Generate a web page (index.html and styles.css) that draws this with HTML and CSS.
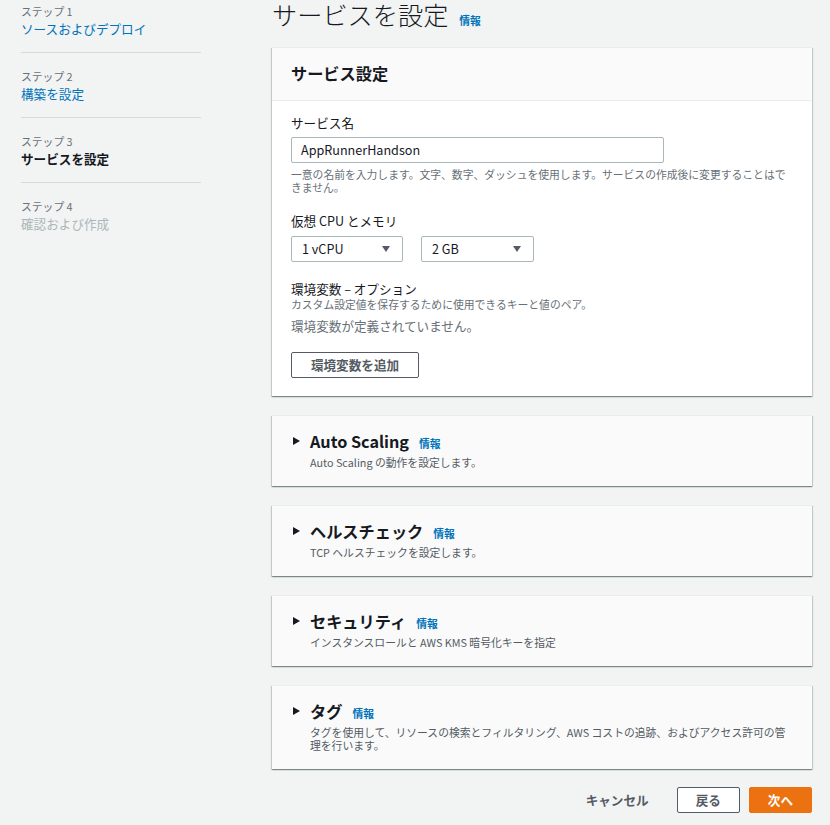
FILE: index.html
```html
<!DOCTYPE html>
<html lang="ja">
<head>
<meta charset="utf-8">
<title>サービスを設定</title>
<link rel="stylesheet" href="styles.css">
</head>
<body>
<div class="layout">
  <nav class="steps">
    <div class="step">
      <div class="step-label">ステップ 1</div>
      <a class="step-title link">ソースおよびデプロイ</a>
    </div>
    <div class="step">
      <div class="step-label">ステップ 2</div>
      <a class="step-title link">構築を設定</a>
    </div>
    <div class="step">
      <div class="step-label">ステップ 3</div>
      <div class="step-title current">サービスを設定</div>
    </div>
    <div class="step">
      <div class="step-label">ステップ 4</div>
      <div class="step-title disabled">確認および作成</div>
    </div>
  </nav>

  <main class="main">
    <h1 class="page-title">サービスを設定<a class="info">情報</a></h1>

    <section class="card">
      <div class="card-header"><h2 class="card-title">サービス設定</h2></div>
      <div class="card-body">
        <div class="label">サービス名</div>
        <div class="input">AppRunnerHandson</div>
        <p class="hint hint-gap">一意の名前を入力します。文字、数字、ダッシュを使用します。サービスの作成後に変更することはできません。</p>

        <div class="label field-gap">仮想 CPU とメモリ</div>
        <div class="selects">
          <div class="select"><span>1 vCPU</span><i class="caret"></i></div>
          <div class="select"><span>2 GB</span><i class="caret"></i></div>
        </div>

        <div class="label field-gap">環境変数 – オプション</div>
        <p class="hint">カスタム設定値を保存するために使用できるキーと値のペア。</p>
        <p class="empty">環境変数が定義されていません。</p>
        <button class="btn btn-normal add-btn">環境変数を追加</button>
      </div>
    </section>

    <section class="card expand">
      <i class="arrow"></i>
      <h3 class="expand-title">Auto Scaling<a class="info">情報</a></h3>
      <p class="expand-desc">Auto Scaling の動作を設定します。</p>
    </section>

    <section class="card expand">
      <i class="arrow"></i>
      <h3 class="expand-title">ヘルスチェック<a class="info">情報</a></h3>
      <p class="expand-desc">TCP ヘルスチェックを設定します。</p>
    </section>

    <section class="card expand">
      <i class="arrow"></i>
      <h3 class="expand-title">セキュリティ<a class="info">情報</a></h3>
      <p class="expand-desc">インスタンスロールと AWS KMS 暗号化キーを指定</p>
    </section>

    <section class="card expand">
      <i class="arrow"></i>
      <h3 class="expand-title">タグ<a class="info">情報</a></h3>
      <p class="expand-desc">タグを使用して、リソースの検索とフィルタリング、AWS コストの追跡、およびアクセス許可の管理を行います。</p>
    </section>

    <div class="actions">
      <button class="btn btn-link">キャンセル</button>
      <button class="btn btn-normal">戻る</button>
      <button class="btn btn-primary">次へ</button>
    </div>
  </main>
</div>
</body>
</html>
```

FILE: styles.css
```css
* { box-sizing: border-box; }

html, body {
  margin: 0;
  padding: 0;
  background: #f2f3f3;
  color: #16191f;
  font-family: "Noto Sans CJK JP", "Noto Sans", sans-serif;
  font-size: 12.6px;
  line-height: 18px;
}

.layout {
  display: grid;
  grid-template-columns: 180px 540px;
  column-gap: 71px;
  padding-left: 21px;
}

/* ---------- steps ---------- */
.steps {
  padding-top: 4px;
}

.step {
  display: flex;
  flex-direction: column;
  padding: 16px 0 14px;
  border-top: 1px solid #d5dbdb;
}

.step:first-child {
  padding-top: 0;
  border-top: none;
}

.step-label {
  font-size: 10.8px;
  line-height: 14px;
  color: #687078;
}

.step-title {
  margin-top: 2px;
  font-size: 12.6px;
  line-height: 18px;
}

.link { color: #0073bb; }
.current { color: #16191f; font-weight: 700; }
.disabled { color: #aab7b8; }

/* ---------- main ---------- */
.main {
  display: flex;
  flex-direction: column;
  gap: 19px;
  padding-bottom: 12px;
}

.page-title {
  margin: 0;
  height: 28px;
  font-size: 25.2px;
  line-height: 28px;
  font-weight: 300;
  color: #16191f;
  white-space: nowrap;
}

.info {
  margin-left: 10px;
  font-size: 10.8px;
  line-height: 1;
  font-weight: 700;
  color: #0073bb;
}

.page-title .info { margin-left: 11px; }

.card {
  background: #ffffff;
  border-top: 1px solid #eaeded;
  box-shadow: 0 1px 1px 0 rgba(0, 28, 36, 0.3),
              1px 1px 1px 0 rgba(0, 28, 36, 0.15),
              -1px 1px 1px 0 rgba(0, 28, 36, 0.15);
}

.card-header {
  background: #fafafa;
  padding: 15px 19px 17px;
  border-bottom: 1px solid #eaeded;
}

.card-title {
  margin: 0;
  font-size: 16.2px;
  line-height: 20px;
  font-weight: 700;
}

.card-body {
  padding: 13px 19px 18px;
  display: flex;
  flex-direction: column;
  align-items: flex-start;
}

.label {
  font-size: 12.6px;
  line-height: 18px;
  color: #16191f;
}

.field-gap { margin-top: 18px; }

.input {
  margin-top: 5px;
  width: 373px;
  height: 26px;
  padding: 0 9px;
  border: 1px solid #aab7b8;
  border-radius: 2px;
  background: #ffffff;
  line-height: 24px;
  font-size: 12.6px;
}

.hint {
  margin: 0;
  font-size: 10.8px;
  line-height: 13px;
  color: #687078;
}

.hint-gap { margin-top: 5px; }

.selects {
  margin-top: 6px;
  display: flex;
  gap: 18px;
}

.select {
  width: 112px;
  height: 26px;
  padding: 0 12px 0 10px;
  border: 1px solid #aab7b8;
  border-radius: 2px;
  background: #ffffff;
  display: flex;
  align-items: center;
  justify-content: space-between;
  line-height: 24px;
}

.select + .select { width: 113px; }

.caret {
  width: 0;
  height: 0;
  border-left: 4px solid transparent;
  border-right: 4px solid transparent;
  border-top: 6px solid #545b64;
}

.empty {
  margin: 6px 0 0;
  font-size: 12.6px;
  line-height: 18px;
  color: #687078;
}

.btn {
  height: 26px;
  padding: 0 18px;
  border: 1px solid transparent;
  border-radius: 2px;
  font-family: inherit;
  font-size: 12.6px;
  line-height: 24px;
  font-weight: 700;
  cursor: pointer;
}

.btn-normal {
  background: #ffffff;
  border-color: #545b64;
  color: #545b64;
}

.btn-link {
  background: transparent;
  color: #545b64;
}

.btn-primary {
  background: #ec7211;
  border-color: #ec7211;
  color: #ffffff;
}

.add-btn {
  margin-top: 17px;
  width: 128px;
  padding: 0;
}

/* ---------- expandable ---------- */
.expand {
  background: #fafafa;
  display: grid;
  grid-template-columns: 17px 1fr;
  padding: 15px 19px 17px 21px;
}

.arrow {
  grid-column: 1;
  grid-row: 1;
  align-self: center;
  width: 0;
  height: 0;
  border-top: 4px solid transparent;
  border-bottom: 4px solid transparent;
  border-left: 7px solid #16191f;
}

.expand-title {
  grid-column: 2;
  grid-row: 1;
  margin: 0;
  height: 20px;
  font-size: 16.2px;
  line-height: 20px;
  font-weight: 700;
  white-space: nowrap;
}

.expand-desc {
  grid-column: 2;
  grid-row: 2;
  margin: 5px 0 0;
  font-size: 10.8px;
  line-height: 13px;
  color: #545b64;
}

/* ---------- footer ---------- */
.actions {
  display: flex;
  justify-content: flex-end;
  gap: 9px;
  margin-top: -1px;
}
```
